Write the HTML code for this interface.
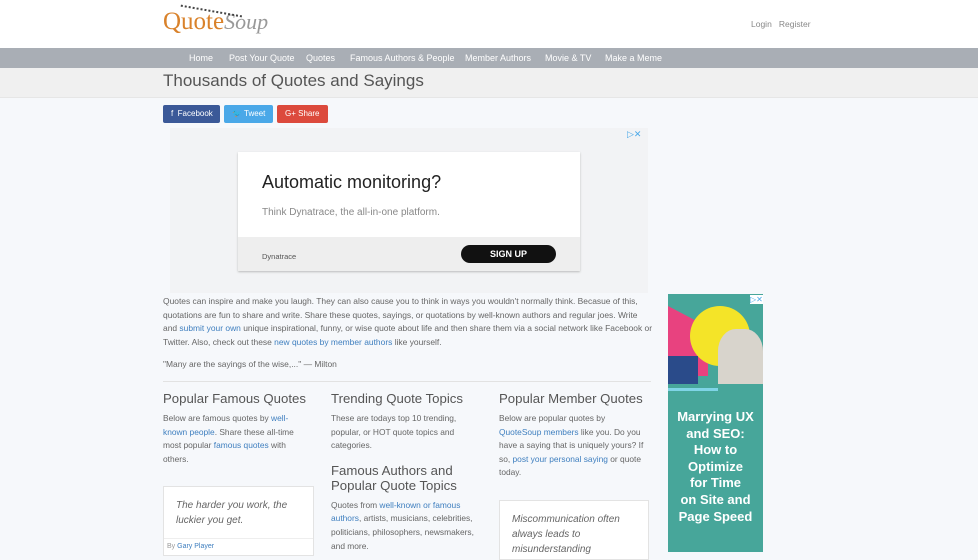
<!DOCTYPE html>
<html><head><meta charset="utf-8"><style>
*{margin:0;padding:0;box-sizing:border-box}
body{width:978px;height:552px;overflow:hidden;background:#f6f8fb;font-family:"Liberation Sans",sans-serif;color:#555;position:relative}
.a{position:absolute}
a{color:#3f7fbf;text-decoration:none}
.hdr{left:0;top:0;width:978px;height:48px;background:#fff}
.nav{left:0;top:48px;width:978px;height:20px;background:#a9aeb5;font-size:9px;color:#fff}
.nav span{position:absolute;top:5px}
.band{left:0;top:68px;width:978px;height:30px;background:#f0f0f0;border-bottom:1px solid #e6e6e6}
.btn{top:105px;height:18px;color:#fff;font-size:8px;line-height:18px;padding-left:8px;border-radius:2px}
p.t{font-size:8.45px;line-height:13.6px;color:#666}
h2{font-weight:normal;font-size:13.2px;color:#555;line-height:15px}
.col p{font-size:8.4px;line-height:13.6px;color:#666;margin-top:6px}
.card{background:#fff;border:1px solid #e3e3e3}
.q{font-size:10px;line-height:15px;font-style:italic;color:#666}
</style></head><body>
<div class="a hdr"></div>
<div class="a" style="left:163px;top:8px;font-family:'Liberation Serif',serif;font-size:25px;color:#d9822b">Quote<span style="font-style:italic;color:#999;font-size:22px">Soup</span></div>
<div class="a" style="left:180px;top:10px;width:62px;height:6px;border-top:2px dotted #444;transform:rotate(10deg)"></div>
<div class="a" style="left:751px;top:19px;font-size:8.5px;color:#888">Login &nbsp; Register</div>
<div class="a nav">
<span style="left:189px">Home</span><span style="left:229px">Post Your Quote</span><span style="left:306px">Quotes</span><span style="left:350px">Famous Authors &amp; People</span><span style="left:465px">Member Authors</span><span style="left:545px">Movie &amp; TV</span><span style="left:605px">Make a Meme</span>
</div>
<div class="a band"></div>
<div class="a" style="left:163px;top:71px;font-size:17px;color:#555">Thousands of Quotes and Sayings</div>
<div class="a btn" style="left:163px;width:57px;background:#3b5998">f&nbsp; Facebook</div>
<div class="a btn" style="left:224px;width:49px;background:#4aa8e8">🐦 Tweet</div>
<div class="a btn" style="left:277px;width:51px;background:#dc4a3d">G+ Share</div>
<div class="a" style="left:170px;top:128px;width:478px;height:165px;background:#f2f3f5"></div>
<div class="a" style="left:627px;top:129px;font-size:9px;color:#4aa8e8">▷✕</div>
<div class="a card" style="left:238px;top:152px;width:342px;height:119px;border:none;box-shadow:0 1px 2px #bbb"></div>
<div class="a" style="left:238px;top:237px;width:342px;height:34px;background:#eeeeee"></div>
<div class="a" style="left:262px;top:172px;font-size:18px;color:#222">Automatic monitoring?</div>
<div class="a" style="left:262px;top:207px;font-size:10px;color:#888">Think Dynatrace, the all-in-one platform.</div>
<div class="a" style="left:262px;top:252px;font-size:7.5px;color:#555">Dynatrace</div>
<div class="a" style="left:461px;top:245px;width:95px;height:18px;background:#111;border-radius:9px;color:#fff;font-size:9px;font-weight:bold;text-align:center;line-height:18px">SIGN UP</div>
<p class="a t" style="left:163px;top:295px;width:490px">Quotes can inspire and make you laugh. They can also cause you to think in ways you wouldn't normally think. Becasue of this, quotations are fun to share and write. Share these quotes, sayings, or quotations by well-known authors and regular joes. Write and <a>submit your own</a> unique inspirational, funny, or wise quote about life and then share them via a social network like Facebook or Twitter. Also, check out these <a>new quotes by member authors</a> like yourself.</p>
<p class="a t" style="left:163px;top:358px">"Many are the sayings of the wise,..." — Milton</p>
<div class="a" style="left:163px;top:381px;width:488px;border-top:1px solid #e2e2e2"></div>
<div class="a col" style="left:163px;top:391px;width:140px"><h2 style="white-space:nowrap">Popular Famous Quotes</h2><p>Below are famous quotes by <a>well-known people</a>. Share these all-time most popular <a>famous quotes</a> with others.</p></div>
<div class="a col" style="left:331px;top:391px;width:150px"><h2>Trending Quote Topics</h2><p>These are todays top 10 trending, popular, or HOT quote topics and categories.</p>
<h2 style="margin-top:10px;width:130px">Famous Authors and Popular Quote Topics</h2><p>Quotes from <a>well-known or famous authors</a>, artists, musicians, celebrities, politicians, philosophers, newsmakers, and more.</p></div>
<div class="a col" style="left:499px;top:391px;width:148px"><h2 style="white-space:nowrap">Popular Member Quotes</h2><p>Below are popular quotes by <a>QuoteSoup members</a> like you. Do you have a saying that is uniquely yours? If so, <a>post your personal saying</a> or quote today.</p></div>
<div class="a card" style="left:163px;top:486px;width:151px;height:70px"></div>
<div class="a q" style="left:176px;top:498px">The harder you work, the<br>luckier you get.</div>
<div class="a" style="left:164px;top:538px;width:149px;border-top:1px solid #eee"></div>
<div class="a" style="left:167px;top:543px;font-size:7px;color:#999">By <a>Gary Player</a></div>
<div class="a card" style="left:499px;top:500px;width:150px;height:60px"></div>
<div class="a q" style="left:512px;top:512px">Miscommunication often<br>always leads to<br>misunderstanding</div>
<div class="a" style="left:668px;top:294px;width:95px;height:258px;background:#47a69a;overflow:hidden">
<div class="a" style="left:0;top:12px;width:40px;height:70px;background:#e8427f;clip-path:polygon(0 0,100% 30%,100% 100%,0 100%)"></div>
<div class="a" style="left:22px;top:12px;width:60px;height:60px;border-radius:50%;background:#f4e428"></div>
<div class="a" style="left:50px;top:35px;width:45px;height:55px;background:#d8d4cc;border-radius:40% 40% 0 0"></div>
<div class="a" style="left:0;top:62px;width:30px;height:28px;background:#2a4b8a"></div>
<div class="a" style="left:0;top:94px;width:50px;height:3px;background:#7fd4e6"></div>
<div class="a" style="left:0;top:115px;width:95px;text-align:center;color:#fff;font-weight:bold;font-size:13px;line-height:16.6px">Marrying UX<br>and SEO:<br>How to<br>Optimize<br>for Time<br>on Site and<br>Page Speed</div>
</div>
<div class="a" style="left:750px;top:295px;font-size:8px;color:#4aa8e8;background:#fff">▷✕</div>
</body></html>
